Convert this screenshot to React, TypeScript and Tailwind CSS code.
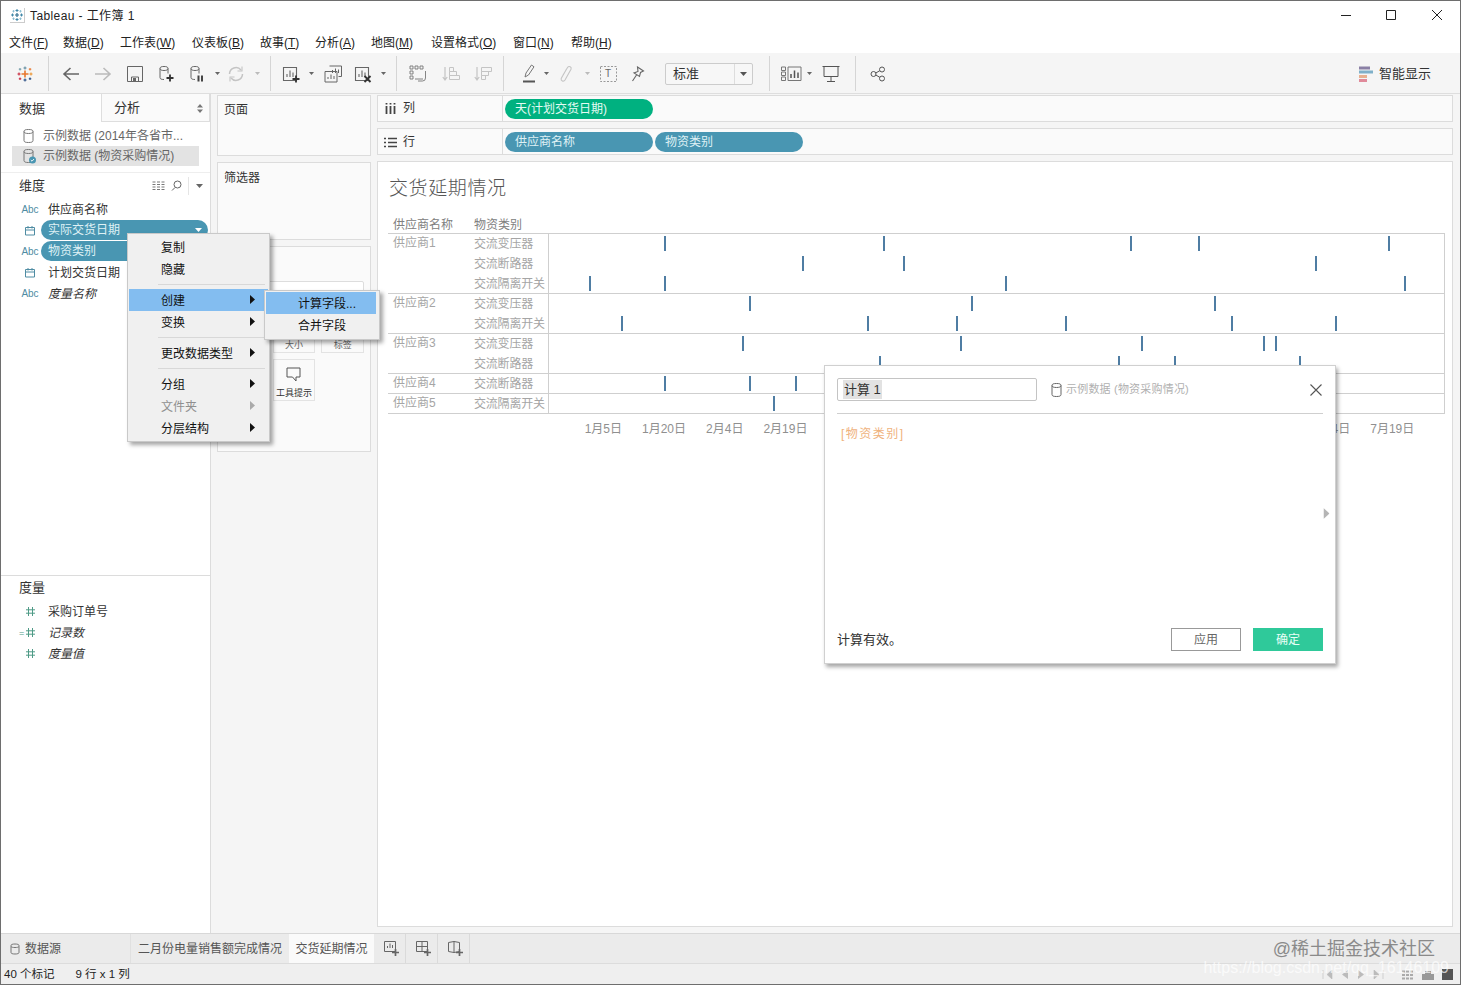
import React from "react";

const Caret = ({ className = "" }: { className?: string }) => (
  <svg width="7" height="4" viewBox="0 0 7 4" className={className}><path d="M0 0h7L3.5 4z" fill="currentColor" /></svg>
);
const TCaret = () => <Caret className="h-[3px] w-[5px]" />;
const RightArrow = ({ className = "" }: { className?: string }) => (
  <svg width="5" height="9" viewBox="0 0 5 9" className={className}><path d="M0 0l5 4.5L0 9z" fill="currentColor" /></svg>
);
const S = ({ w = 20, h = 20, children, className = "" }: { w?: number; h?: number; children: React.ReactNode; className?: string }) => (
  <svg width={w} height={h} viewBox={`0 0 ${w} ${h}`} fill="none" className={className}>{children}</svg>
);
const Db = ({ c = "#777", check = false }: { c?: string; check?: boolean }) => (
  <S w={14} h={16}>
    <path d="M2 3.500C2 2 3.500 1.500 6.500 1.500S11 2 11 3.500v9c0 1.500-1.500 2-4.500 2s-4.500-.5-4.500-2zM2 3.500c0 1.300 1.500 2 4.500 2s4.500-.7 4.500-2" stroke={c} strokeWidth="1" />
    {check && <circle cx="10.500" cy="12" r="3.500" fill="#4996b2" />}
    {check && <path d="M8.800 12l1.200 1.200 2-2.200" stroke="#fff" strokeWidth=".9" />}
  </S>
);
const Cal = () => (
  <S w={11} h={11}><path d="M.5 2.500h9v7.500h-9zM.5 5h9M3 1v2.500M7 1v2.500" stroke="#4f8ca3" strokeWidth="1" /></S>
);
const Hash = ({ eq = false }: { eq?: boolean }) => (
  <span className="relative flex w-[18px] justify-center">
    {eq && <span className="absolute left-[-2px] top-[2px] text-[9px] leading-[9px] text-[#4e9a86]">=</span>}
    <S w={11} h={11}><path d="M3.500 1v9M7.500 1v9M1 3.800h9M1 7.200h9" stroke="#4e9a86" strokeWidth="1" /></S>
  </span>
);
const TableauLogo = () => (
  <S w={18} h={18}>
    <path d="M9 5.500v7M5.500 9h7" stroke="#e8762d" strokeWidth="1.600" />
    <path d="M9 1.500v3M7.500 3h3" stroke="#5b879b" strokeWidth="1" />
    <path d="M9 13.500v3M7.500 15h3" stroke="#1f457e" strokeWidth="1" />
    <path d="M3 7.500v3M1.500 9h3" stroke="#c72037" strokeWidth="1" />
    <path d="M15 7.500v3M13.500 9h3" stroke="#eb912b" strokeWidth="1" />
    <path d="M4 3v2.500M2.800 4.200h2.500" stroke="#7099a6" strokeWidth="1" />
    <path d="M14 3v2.500M12.800 4.200h2.500" stroke="#e8762d" strokeWidth="1" />
    <path d="M4 12.500V15M2.800 13.800h2.500" stroke="#c72037" strokeWidth="1" />
    <path d="M14 12.500V15M12.800 13.800h2.500" stroke="#1f457e" strokeWidth="1" />
  </S>
);
const BarIcon = ({ stroke = "#666" }: { stroke?: string }) => (
  <path d="M1.500 2.500h13v13h-13zM5 12V9M8 12V5.500M11 12V7.500" stroke={stroke} strokeWidth="1.100" />
);

const Sep = ({ className }: { className: string }) => <span className={`h-[35px] w-px shrink-0 bg-[#d5d5d5] ${className}`} />;
const Cell = ({ className, children }: { className: string; children?: React.ReactNode }) => (
  <span className={`flex shrink-0 items-center justify-center ${className}`}>{children}</span>
);

const menus: [string, string, string][] = [
  ["文件(", "F", "w-[54px]"], ["数据(", "D", "w-[57px]"], ["工作表(", "W", "w-[72px]"], ["仪表板(", "B", "w-[68px]"], ["故事(", "T", "w-[55px]"],
  ["分析(", "A", "w-[56px]"], ["地图(", "M", "w-[60px]"], ["设置格式(", "O", "w-[82px]"], ["窗口(", "N", "w-[58px]"], ["帮助(", "H", "w-[50px]"],
];

const chart = [
  { v: "供应商1", items: [
    { n: "交流变压器", m: [664, 883, 1130, 1198, 1388] },
    { n: "交流断路器", m: [802, 903, 1315] },
    { n: "交流隔离开关", m: [589, 664, 1005, 1404] },
  ] },
  { v: "供应商2", items: [
    { n: "交流变压器", m: [749, 971, 1214] },
    { n: "交流隔离开关", m: [621, 867, 956, 1065, 1231, 1335] },
  ] },
  { v: "供应商3", items: [
    { n: "交流变压器", m: [742, 960, 1141, 1263, 1275] },
    { n: "交流断路器", m: [879, 1118, 1174, 1299] },
  ] },
  { v: "供应商4", items: [{ n: "交流断路器", m: [664, 749, 795] }] },
  { v: "供应商5", items: [{ n: "交流隔离开关", m: [773] }] },
];
// labels in the middle of the axis lie under the dialog and are not seen
const axis = ["1月5日", "1月20日", "2月4日", "2月19日", "", "", "", "", "", "", "", "", "7月4日", "7月19日"];

const Field = ({ icon, label, italic = false }: { icon: React.ReactNode; label: string; italic?: boolean }) => (
  <div className="flex h-[21px] items-center">
    <span className="ml-[20px] flex w-[18px] shrink-0 justify-center">{icon}</span>
    <span className={`ml-[9px] text-[12px] text-[#333] ${italic ? "italic" : ""}`}>{label}</span>
  </div>
);
const Abc = () => <span className="text-[10px] leading-none text-[#4f8ca3]">Abc</span>;

const MenuItem = ({ label, arrow = false, active = false, disabled = false }: { label: string; arrow?: boolean; active?: boolean; disabled?: boolean }) => (
  <div className={`relative mx-px flex h-[22px] items-center pl-[32px] pt-[1px] text-[12px] ${active ? "bg-[#83bdf0] text-[#111]" : ""} ${disabled ? "text-[#8f8f8f]" : "text-[#111]"}`}>
    {label}
    {arrow && <RightArrow className={`absolute right-[13px] top-[6px] ${disabled ? "text-[#aaa]" : "text-[#111]"}`} />}
  </div>
);
const MenuSep = () => <div className="ml-[30px] mr-[4px] my-[4px] h-px bg-[#d8d8d8]" />;

const Pill = ({ label, color, className = "" }: { label: string; color: string; className?: string }) => (
  <div className={`flex h-[20px] w-[148px] items-center rounded-full pl-[10px] text-[12px] text-[#dff1f5] ${color} ${className}`}>{label}</div>
);

export default function App() {
  return (
    <div className="relative flex h-[985px] w-[1461px] flex-col overflow-hidden border border-[#6e6e6e] bg-white font-['Liberation_Sans','Noto_Sans_CJK_SC',sans-serif] text-[#333]">
      {/* title bar */}
      <div className="flex h-[29px] shrink-0 items-center">
        <span className="ml-[9px] flex h-[15px] w-[15px] items-center justify-center border-b border-r border-[#ccc]">
          <S w={14} h={14}>
            <path d="M7 1v3M5.500 2.500h3M7 10v3M5.500 11.500h3M2.500 5.500v3M1 7h3M11.500 5.500v3M10 7h3" stroke="#3f87a8" />
            <path d="M7 5v4M5 7h4" stroke="#2f6f8f" strokeWidth="1.200" />
            <path d="M3.500 2v2.500M2.300 3.200h2.400M10.500 2v2.500M9.300 3.200h2.400M3.500 9.500V12M2.300 10.700h2.400M10.500 9.500V12M9.300 10.700h2.400" stroke="#7fb6cc" strokeWidth=".8" />
          </S>
        </span>
        <span className="ml-[5px] text-[12px] tracking-[.4px] text-[#222]">Tableau - 工作簿 1</span>
        <div className="ml-auto flex items-center pb-[2px]">
          <S w={12} h={12} className="mr-[33px]"><path d="M1 6.500h10" stroke="#222" /></S>
          <S w={12} h={12} className="mr-[34px]"><path d="M1.500 1.500h9v9h-9z" stroke="#222" /></S>
          <S w={12} h={12} className="mr-[17px]"><path d="M1 1l10 10M11 1L1 11" stroke="#222" /></S>
        </div>
      </div>
      {/* menu bar */}
      <div className="flex h-[23px] shrink-0 items-center pl-[8px] pt-[3px] text-[12px] text-[#222]">
        {menus.map(([a, b, w]) => (
          <span key={b} className={`shrink-0 ${w}`}>{a}<span className="underline">{b}</span>)</span>
        ))}
      </div>
      {/* toolbar */}
      <div className="flex h-[41px] shrink-0 items-center border-b border-[#dedede] bg-[#f5f5f5] pt-px">
        <Cell className="ml-[8px] w-[32px]"><TableauLogo /></Cell>
        <Sep className="ml-[7px]" />
        <Cell className="ml-[6px] w-[32px]"><S w={18} h={16}><path d="M17 8H2M8.500 2L2 8l6.500 6" stroke="#666" strokeWidth="1.600" /></S></Cell>
        <Cell className="w-[32px]"><S w={18} h={16}><path d="M1 8h15M9.500 2L16 8l-6.500 6" stroke="#bbb" strokeWidth="1.600" /></S></Cell>
        <Cell className="w-[32px]"><S w={16} h={16}><path d="M.5.500h15v15H.5zM4.500 15.500v-4.500h7v4.500" stroke="#666" /><path d="M6 12h3v3H6z" fill="#666" /></S></Cell>
        <Cell className="w-[32px]"><S w={18} h={18}><path d="M2 3.500C2 2 3.500 1.500 6 1.500s4 .5 4 2v5M2 3.500v9c0 1.500 1.500 2 4 2M2 3.500c0 1.300 1.500 2 4 2s4-.7 4-2" stroke="#666" /><path d="M12 9.500v7M8.500 13h7" stroke="#333" strokeWidth="1.800" /></S></Cell>
        <Cell className="w-[30px]"><S w={18} h={18}><path d="M2 3.500C2 2 3.500 1.500 6 1.500s4 .5 4 2v5M2 3.500v9c0 1.500 1.500 2 4 2M2 3.500c0 1.300 1.500 2 4 2s4-.7 4-2" stroke="#666" /><path d="M9.500 10.500v6M13 10.500v6" stroke="#444" strokeWidth="2" /></S></Cell>
        <Cell className="w-[8px] text-[#666]"><TCaret /></Cell>
        <Cell className="w-[30px]"><S w={18} h={18}><path d="M2.500 9a6.500 6.500 0 0 1 11.500-4M15.500 9A6.500 6.500 0 0 1 4 13" stroke="#c4c4c4" strokeWidth="1.500" /><path d="M15 1.500V6h-4.500M3 16.500V12h4.500" stroke="#c4c4c4" strokeWidth="1.100" /></S></Cell>
        <Cell className="ml-[2px] w-[8px] text-[#bbb]"><TCaret /></Cell>
        <Sep className="ml-[9px]" />
        <Cell className="ml-[4px] w-[32px]"><S w={18} h={18}><BarIcon /><path d="M14 10.500v7M10.500 14h7" stroke="#333" strokeWidth="1.800" /></S></Cell>
        <Cell className="w-[8px] text-[#666]"><TCaret /></Cell>
        <Cell className="w-[36px]"><S w={18} h={18}><path d="M5.500 1h12v10.500h-3M8.500 8V5M11.500 8V3.500M14.500 8V4.500" stroke="#666" /><path d="M1 6.500h12v10.500H1zM4 14v-2M7 14V9.500M10 14v-3" stroke="#666" /></S></Cell>
        <Cell className="w-[24px]"><S w={18} h={18}><BarIcon /><path d="M10.500 11l6 6M16.500 11l-6 6" stroke="#333" strokeWidth="1.900" /></S></Cell>
        <Cell className="w-[16px] text-[#666]"><TCaret /></Cell>
        <Sep className="ml-[5px]" />
        <Cell className="ml-[5px] w-[32px]"><S w={18} h={18}><path d="M1 1h3v3H1zM6 1h3v3H6zM11 1h3v3h-3zM1 6h3v3H1zM1 11h3v3H1zM6 14h8M16.500 6v7a3 3 0 0 1-3 3H9" stroke="#777" strokeWidth=".9" /></S></Cell>
        <Cell className="ml-px w-[32px]"><S w={18} h={16}><path d="M3 1v13M.8 11L3 14l2.200-3" stroke="#c4c4c4" strokeWidth="1.200" /><path d="M7.500 1.500h4v4h-4zM7.500 5.500h7v4h-7zM7.500 9.500h10v4h-10z" stroke="#c4c4c4" /></S></Cell>
        <Cell className="w-[32px]"><S w={18} h={16}><path d="M3 1v13M.8 11L3 14l2.200-3" stroke="#c4c4c4" strokeWidth="1.200" /><path d="M7.500 1.500h10v4h-10zM7.500 5.500h7v4h-7zM7.500 9.500h4v4h-4z" stroke="#c4c4c4" /></S></Cell>
        <Sep className="ml-[4px]" />
        <Cell className="ml-[12px] w-[26px]"><S w={14} h={20}><path d="M3 13l1-4 5.500-8 2.500 1.800L6.500 11z" stroke="#777" /><path d="M1 17.500h12" stroke="#555" strokeWidth="2" /></S></Cell>
        <Cell className="w-[8px] text-[#666]"><TCaret /></Cell>
        <Cell className="ml-[3px] w-[26px]"><S w={14} h={18}><path d="M3.500 11L8.500 2.500c1.500-2 4.500-.5 3.500 1.800L6 15c-1.300 2-4.500 1-3.800-1.500L7 5" stroke="#c4c4c4" strokeWidth="1.100" /></S></Cell>
        <Cell className="ml-[4px] w-[8px] text-[#bbb]"><TCaret /></Cell>
        <Cell className="relative ml-[4px] w-[26px]"><S w={17} h={16}><path d="M.5.500h16v15H.5z" stroke="#999" strokeDasharray="2 1.500" /></S><span className="absolute text-[10px] text-[#666]">T</span></Cell>
        <Cell className="ml-[4px] w-[26px]"><S w={14} h={16}><path d="M6.500 1l6 4-3 1.500-1 4L3 7l4-1.500zM5.500 9L1.500 15" stroke="#666" strokeWidth="1.100" /></S></Cell>
        <div className="ml-[14px] flex h-[22px] w-[88px] shrink-0 items-center rounded-[2px] border border-[#ccc] bg-[#f7f7f7]">
          <span className="flex-1 pl-[7px] text-[13px]">标准</span>
          <span className="flex h-full w-[18px] items-center justify-center border-l border-[#ddd] text-[#555]"><Caret /></span>
        </div>
        <Sep className="ml-[16px]" />
        <Cell className="ml-[8px] w-[26px]"><S w={21} h={16}><path d="M.5 1h4v3.500h-4zM.5 6h4v3.500h-4zM.5 11h4v3.500h-4zM7 1h13v13.500H7z" stroke="#777" /><path d="M10 12V8M13.500 12V4.500M17 12V6.500" stroke="#555" strokeWidth="1.500" /></S></Cell>
        <Cell className="ml-px w-[8px] text-[#666]"><TCaret /></Cell>
        <Cell className="ml-[5px] w-[26px]"><S w={18} h={18}><path d="M.5 1.500h17M2 1.500h14v10H2zM9 11.500v5M5 16.500h8" stroke="#555" /></S></Cell>
        <Sep className="ml-[11px]" />
        <Cell className="ml-[10px] w-[24px]"><S w={16} h={16}><circle cx="3.500" cy="8" r="2.500" stroke="#555" /><circle cx="12" cy="3.500" r="2.500" stroke="#555" /><circle cx="12" cy="12.500" r="2.500" stroke="#555" /><path d="M5.800 7l4-2.300M5.800 9l4 2.300" stroke="#555" /></S></Cell>
        <div className="ml-auto mr-[29px] flex items-center">
          <S w={14} h={16}><path d="M0 2h11" stroke="#8a80a5" strokeWidth="3" /><path d="M0 6h14" stroke="#7fb0c9" strokeWidth="3" /><path d="M0 10.500h8" stroke="#e8b08f" strokeWidth="3" /><path d="M0 14.500h8" stroke="#e08a9a" strokeWidth="3" /></S>
          <span className="ml-[6px] text-[13px]">智能显示</span>
        </div>
      </div>

      {/* main */}
      <div className="flex min-h-0 flex-1 bg-[#f5f5f5]">
        {/* sidebar */}
        <aside className="flex w-[210px] shrink-0 flex-col border-r border-[#dcdcdc] bg-white">
          <div className="flex h-[28px] shrink-0">
            <div className="flex w-[100px] items-center pl-[18px] pt-[1px] text-[13px]">数据</div>
            <div className="flex flex-1 items-center justify-between border-x border-b border-[#dedede] bg-[#fafafa] pl-[12px] pr-[6px] pt-[1px] text-[13px]">
              分析
              <S w={6} h={9}><path d="M0 3.500L3 0l3 3.500zM0 5.500L3 9l3-3.500z" fill="#777" /></S>
            </div>
          </div>
          <div className="mt-[4px] flex h-[20px] items-center pl-[21px] text-[12px] text-[#666]"><Db /><span className="ml-[7px]">示例数据 (2014年各省市...</span></div>
          <div className="ml-[11px] mr-[11px] flex h-[20px] items-center bg-[#e3e3e3] pl-[10px] text-[12px] text-[#666]"><Db check /><span className="ml-[7px]">示例数据 (物资采购情况)</span></div>
          <div className="mt-[6px] border-t border-[#eee]" />
          <div className="flex min-h-0 flex-1 flex-col border-b border-[#dcdcdc]">
            <div className="mt-[2px] flex h-[21px] items-center pl-[18px] text-[13px]">
              维度
              <S w={13} h={10} className="ml-auto"><path d="M.5 1h3M5 1h3M9.500 1h3M.5 3.500h3M5 3.500h3M9.500 3.500h3M.5 6h3M5 6h3M9.500 6h3M.5 8.500h3M5 8.500h3M9.500 8.500h3" stroke="#777" /></S>
              <S w={11} h={11} className="ml-[6px]"><circle cx="6.500" cy="4.500" r="3.500" stroke="#666" /><path d="M4 7.500L1 10.500" stroke="#666" /></S>
              <span className="ml-[6px] h-[18px] w-px bg-[#e5e5e5]" />
              <Caret className="ml-[7px] mr-[7px] text-[#666]" />
            </div>
            <div className="mt-[3px]">
              <Field icon={<Abc />} label="供应商名称" />
              <div className="flex h-[21px]">
                <span className="ml-[20px] flex w-[18px] shrink-0 items-center justify-center"><Cal /></span>
                <div className="ml-[2px] flex h-[20px] w-[167px] items-center justify-between rounded-full bg-[#4996b2] pl-[7px] pr-[6px] text-[12px] text-[#dff1f5]">实际交货日期<Caret className="text-white" /></div>
              </div>
              <div className="flex h-[21px]">
                <span className="ml-[20px] flex w-[18px] shrink-0 items-center justify-center"><Abc /></span>
                <div className="ml-[2px] flex h-[20px] w-[167px] items-center rounded-full bg-[#4996b2] pl-[7px] text-[12px] text-[#dff1f5]">物资类别</div>
              </div>
              <Field icon={<Cal />} label="计划交货日期" />
              <Field icon={<Abc />} label="度量名称" italic />
            </div>
          </div>
          <div className="flex h-[357px] shrink-0 flex-col">
            <div className="flex h-[24px] items-center pl-[18px] text-[13px]">度量</div>
            <div className="mt-[1px]">
              <Field icon={<Hash />} label="采购订单号" />
              <Field icon={<Hash eq />} label="记录数" italic />
              <Field icon={<Hash />} label="度量值" italic />
            </div>
          </div>
        </aside>

        {/* cards */}
        <div className="ml-[6px] mt-px flex w-[154px] shrink-0 flex-col gap-[6px]">
          <div className="h-[61px] border border-[#dcdcdc] bg-[#fafafa] px-[6px] pt-[5px] text-[12px]">页面</div>
          <div className="h-[78px] border border-[#dcdcdc] bg-[#fafafa] px-[6px] pt-[6px] text-[12px]">筛选器</div>
          <div className="h-[206px] border border-[#dcdcdc] bg-[#fafafa] px-[6px] pt-[6px] text-[12px]">
            <div className="mt-[28px] ml-[1px] h-[22px] rounded-[2px] border border-[#ddd] bg-white" />
            <div className="mt-[8px] grid grid-cols-3 gap-x-[6px] gap-y-[6px]">
              {["", "大小", "标签", "", "工具提示"].map((t, i) => (
                <div key={i} className={`flex h-[42px] flex-col items-center justify-end border border-[#e3e3e3] bg-[#fafafa] text-[9px] ${i < 3 ? "text-[#666]" : "text-[#333]"}`}>
                  {i === 4 && <S w={15} h={15} className="mb-[5px]"><path d="M1 1h13v9H10v4L6.500 10H1z" stroke="#555" /></S>}
                  <span>{t}</span>
                </div>
              ))}
            </div>
          </div>
        </div>

        {/* right */}
        <div className="ml-[6px] mr-[7px] flex min-w-0 flex-1 flex-col">
          <div className="mt-px flex h-[27px] shrink-0 items-center border border-[#dcdcdc] bg-[#fafafa]">
            <div className="flex h-full w-[125px] shrink-0 items-center border-r border-[#dcdcdc] pb-px pl-[7px] text-[12px]">
              <S w={11} h={11}><path d="M1.500 0v1.500M5.500 0v1.500M9.500 0v1.500M1.500 3v8M5.500 3v8M9.500 3v8" stroke="#444" strokeWidth="1.800" /></S>
              <span className="ml-[7px]">列</span>
            </div>
            <Pill label="天(计划交货日期)" color="bg-[#00b180]" className="ml-[2px] text-[#e4fbf4]" />
          </div>
          <div className="mt-[6px] flex h-[27px] shrink-0 items-center border border-[#dcdcdc] bg-[#fafafa]">
            <div className="flex h-full w-[125px] shrink-0 items-center border-r border-[#dcdcdc] pl-[6px] pt-px text-[12px]">
              <S w={13} h={11}><path d="M0 1.500h2M4 1.500h9M0 5.500h2M4 5.500h9M0 9.500h2M4 9.500h9" stroke="#444" strokeWidth="1.700" /></S>
              <span className="ml-[6px]">行</span>
            </div>
            <Pill label="供应商名称" color="bg-[#4996b2]" className="ml-[2px]" />
            <Pill label="物资类别" color="bg-[#4996b2]" className="ml-[2px]" />
          </div>
          <div className="mb-[6px] mt-[6px] flex min-h-0 flex-1 flex-col border border-[#dcdcdc] bg-white pl-[10px] pr-[7px]">
            <div className="ml-px mt-[13px] h-[28px] text-[19px] font-light leading-[28px] tracking-[.6px] text-[#555]">交货延期情况</div>
            <div className="mt-[13px] flex h-[17px] pt-px text-[12px] leading-[17px] text-[#808080]">
              <span className="w-[86px] pl-[5px]">供应商名称</span>
              <span>物资类别</span>
            </div>
            <div className="border-t border-[#cfcfcf]">
              {chart.map((g) => (
                <div key={g.v} className="flex border-b border-[#cfcfcf]">
                  <div className="w-[86px] shrink-0 pl-[5px] text-[12px] leading-[19px] text-[#a5a5a5]">{g.v}</div>
                  <div className="flex flex-1 flex-col">
                    {g.items.map((it, i) => (
                      <div key={it.n + i} className="flex h-[20px] last:h-[19px]">
                        <span className="w-[74px] shrink-0 whitespace-nowrap text-[12px] leading-[20px] tracking-[-.2px] text-[#a5a5a5]">{it.n}</span>
                        <div className="relative flex-1 border-l border-r border-[#cfcfcf]">
                          {it.m.map((x) => (
                            <span key={x} className="absolute top-[2px] h-[15px] w-[2px] bg-[#4f7da3]" style={{ left: x - 549 }} />
                          ))}
                        </div>
                      </div>
                    ))}
                  </div>
                </div>
              ))}
            </div>
            <div className="ml-[185px] mt-[6px] flex text-[12px] text-[#8f8f8f]">
              {axis.map((a, i) => (
                <span key={i} className="w-[60.7px] shrink-0 whitespace-nowrap text-center">{a}</span>
              ))}
            </div>
          </div>
        </div>
      </div>

      {/* tabs */}
      <div className="flex h-[30px] shrink-0 border-t border-[#d8d8d8] bg-[#ebebeb] text-[12px] text-[#555]">
        <div className="flex w-[130px] items-center border-r border-[#e0e0e0] pl-[9px]">
          <S w={10} h={12}><path d="M1 2.500C1 1.500 2.500 1 5 1s4 .5 4 1.500v7C9 10.500 7.500 11 5 11s-4-.5-4-1.500zM1 3.500c.5.800 2 1 4 1s3.500-.2 4-1" stroke="#777" /></S>
          <span className="ml-[5px]">数据源</span>
        </div>
        <div className="flex w-[158px] items-center justify-center">二月份电量销售额完成情况</div>
        <div className="flex w-[85px] items-center justify-center bg-[#fafafa]">交货延期情况</div>
        {[0, 1, 2].map((k) => (
          <div key={k} className="flex w-[32px] items-center justify-center border-r border-[#dadada] pl-[3px]">
            <S w={17} h={17}>
              {k === 0 && <path d="M1.500 1.500h11v10h-11zM4.500 8V6M7 8V3.500M9.500 8V5" stroke="#666" />}
              {k === 1 && <path d="M1.500 1.500h11v10h-11zM7 1.500v10M1.500 6.500h11" stroke="#666" />}
              {k === 2 && <path d="M1.500 2.500L7 1.500l5.500 1v9l-5.500 1-5.500-1zM7 1.500v11" stroke="#666" />}
              <path d="M12.500 9v7M9 12.500h7" stroke="#666" strokeWidth="1.700" />
            </S>
          </div>
        ))}
        <div className="ml-auto flex items-center pr-[25px] pt-px text-[18px] text-[#8a8a8a]">@稀土掘金技术社区</div>
      </div>
      {/* status */}
      <div className="relative flex h-[21px] shrink-0 items-center border-t border-[#dcdcdc] bg-[#efefef] pt-px text-[11.5px] text-[#222]">
        <span className="ml-[3px]">40 个标记</span>
        <span className="ml-[21px]">9 行 x 1 列</span>
        <div className="ml-auto mr-[7px] flex items-center gap-[8px]">
          <S w={11} h={9}><path d="M1 0v9M10 0L5 4.500 10 9z" fill="#bbb" stroke="#bbb" strokeWidth=".6" /></S>
          <S w={8} h={9}><path d="M7 0L1 4.500 7 9z" fill="#bbb" /></S>
          <S w={8} h={9}><path d="M1 0l6 4.500L1 9z" fill="#bbb" /></S>
          <S w={11} h={9}><path d="M10 0v9M1 0l5 4.500L1 9z" fill="#bbb" stroke="#bbb" strokeWidth=".6" /></S>
          <S w={12} h={10} className="ml-[10px]"><path d="M0 1.500h12M0 5h12M0 8.500h12" stroke="#aaa" strokeWidth="2" strokeDasharray="3 1" /></S>
          <S w={12} h={10}><path d="M0 4h12v6H0zM3 1h6v3H3z" fill="#999" /></S>
          <S w={11} h={11}><path d="M0 0h11v11H0z" fill="#555" /></S>
        </div>
        <span className="absolute right-[11px] top-[-8px] text-[16px] text-white/70">https://blog.csdn.net/qq_16146109</span>
      </div>

      {/* context menu */}
      <div className="absolute left-[126px] top-[232px] h-[209px] w-[143px] border border-[#c9c9c9] bg-[#f0f0f0] py-[2px] shadow-[3px_3px_4px_rgba(0,0,0,0.35)]">
        <MenuItem label="复制" />
        <MenuItem label="隐藏" />
        <MenuSep />
        <MenuItem label="创建" arrow active />
        <MenuItem label="变换" arrow />
        <MenuSep />
        <MenuItem label="更改数据类型" arrow />
        <MenuSep />
        <MenuItem label="分组" arrow />
        <MenuItem label="文件夹" arrow disabled />
        <MenuItem label="分层结构" arrow />
      </div>
      {/* submenu */}
      <div className="absolute left-[263px] top-[289px] h-[50px] w-[116px] border border-[#c9c9c9] bg-[#f0f0f0] py-px text-[12px] shadow-[3px_3px_4px_rgba(0,0,0,0.35)]">
        <div className="ml-px mr-[3px] flex h-[22px] items-center bg-[#83bdf0] pl-[32px] pt-px text-[#111]">计算字段...</div>
        <div className="ml-px mr-[3px] flex h-[22px] items-center pl-[32px] pt-px text-[#111]">合并字段</div>
      </div>

      {/* calc dialog */}
      <div className="absolute left-[823px] top-[364px] flex h-[299px] w-[512px] flex-col border border-[#d0d0d0] bg-white px-[12px] shadow-[2px_3px_4px_rgba(0,0,0,0.35)]">
        <div className="flex h-[48px] shrink-0 items-center border-b border-[#cfcfcf]">
          <div className="flex h-[23px] w-[200px] items-center rounded-[2px] border border-[#c4c4c4] px-[5px] text-[13px] text-[#333]">
            <span className="bg-[#e2e2e2] px-px">计算 1</span>
          </div>
          <span className="ml-[13px]"><Db c="#666" /></span>
          <span className="ml-[2px] text-[11px] tracking-[.2px] text-[#b0b0b0]">示例数据 (物资采购情况)</span>
          <S w={14} h={14} className="ml-auto"><path d="M1.500 1.500l11 11M12.500 1.500l-11 11" stroke="#555" strokeWidth="1.100" /></S>
        </div>
        <div className="relative min-h-0 flex-1 pl-[4px] pt-[13px] text-[12px] leading-[15px] tracking-[1.500px] text-[#efb27d]">
          [物资类别]
          <RightArrow className="absolute right-[-6px] top-[95px] scale-[1.200] text-[#b5b5b5]" />
        </div>
        <div className="flex h-[36px] shrink-0 items-start pt-px">
          <span className="pt-[2px] text-[13px] text-[#333]">计算有效。</span>
          <button className="ml-auto h-[23px] w-[70px] border border-[#999] bg-white text-[12px] text-[#666]">应用</button>
          <button className="ml-[12px] h-[23px] w-[70px] bg-[#2fc99a] text-[12px] text-[#e8fff7]">确定</button>
        </div>
      </div>
    </div>
  );
}
